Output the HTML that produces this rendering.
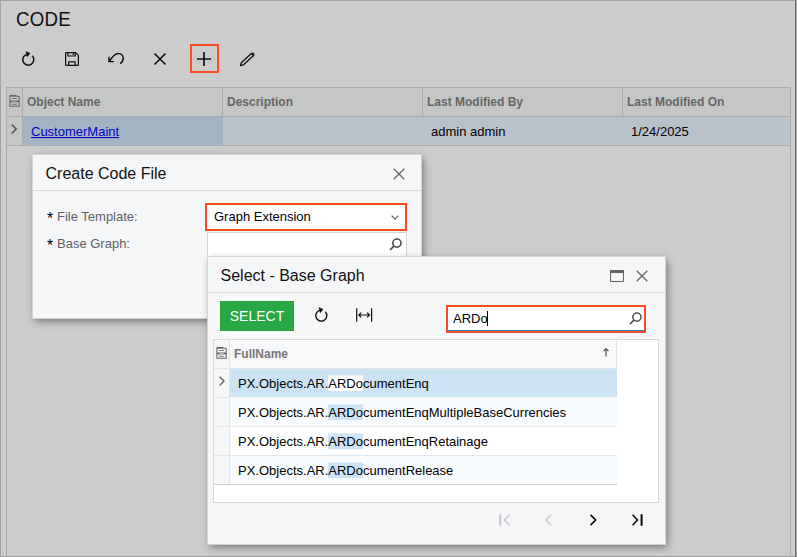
<!DOCTYPE html>
<html>
<head>
<meta charset="utf-8">
<title>Code</title>
<style>
html,body{margin:0;padding:0;}
body{width:797px;height:557px;overflow:hidden;background:#cccccc;font-family:"Liberation Sans",Arial,sans-serif;font-size:13px;color:#000;position:relative;}
.abs{position:absolute;}
.frame{position:absolute;left:0;top:0;width:797px;height:557px;box-sizing:border-box;border-left:1px solid #a2a2a2;border-top:1px solid #a2a2a2;border-bottom:1px solid #9c9c9c;pointer-events:none;z-index:50;}
.title{left:16px;top:9px;font-size:18.7px;letter-spacing:0.25px;line-height:22px;color:#111;transform:scaleY(1.05);transform-origin:0 17.2px;}
.tb svg{position:absolute;overflow:visible;}
.plusbox{left:190px;top:44px;width:29px;height:29px;box-sizing:border-box;border:2px solid #fb4b20;}
/* main grid */
.grid1{left:6px;top:87px;width:785px;height:480px;box-sizing:border-box;border:1px solid #a9abad;background:#cccccc;}
.g1head{left:7px;top:88px;width:783px;height:28px;background:#c5c7c6;}
.g1head div{position:absolute;top:0;height:28px;line-height:28px;font-weight:bold;font-size:12px;color:#666;box-sizing:border-box;border-left:1px solid #a9abad;padding-left:4px;white-space:nowrap;}
.g1row{left:7px;top:117px;width:783px;height:28px;background:#b9c1ca;}
.g1row div{position:absolute;top:0;height:28px;line-height:28px;font-size:13px;white-space:nowrap;}
a.lnk{color:#0000c6;text-decoration:underline;}
/* dialogs */
.dlg{background:#f5f6f7;box-shadow:0 0 0 1px #d2d4d7, 2px 3px 8px 0 rgba(0,0,0,.45);}
.dlg1{left:33px;top:155px;width:388px;height:163px;}
.dlg2{left:208px;top:257px;width:457px;height:287px;}
.dhead{position:absolute;left:0;top:0;right:0;border-bottom:1px solid #d6d8da;font-size:16px;color:#111;}
.lbl{font-size:13px;color:#5c6066;white-space:nowrap;transform:scaleY(1.05);transform-origin:0 12.3px;}
.ast{display:inline-block;width:10px;color:#000;font-size:15.5px;font-weight:normal;position:relative;top:3px;left:0;line-height:10px;}
.inp{box-sizing:border-box;background:#fff;border:1px solid #d3d6d9;}
.btn{left:220px;top:301px;width:74px;height:30px;background:#27a844;color:#fff;font-size:14px;line-height:30px;text-align:center;}
.g2{left:213px;top:339px;width:446px;height:164px;box-sizing:border-box;border:1px solid #d5d7da;background:#fff;}
.g2 .row{position:absolute;left:16px;width:387px;height:28px;line-height:28px;font-size:13px;white-space:nowrap;box-sizing:content-box;border-bottom:1px solid #e1e9ef;}
.g2 .row span.t{position:absolute;left:8px;top:1px;transform:scaleY(1.05);transform-origin:0 18.3px;}
.hl{background:#cce3f4;}
.hlw{background:#fff;}
</style>
</head>
<body>
<!-- page title -->
<div class="abs title">CODE</div>

<!-- toolbar -->
<div class="abs tb" style="left:0;top:0;">
  <!-- refresh -->
  <svg style="left:20px;top:51px" width="16" height="16" viewBox="0 0 16 16" fill="none" stroke="#111" stroke-width="1.5"><path d="M12.3 4.85 A5.5 5.5 0 1 1 7.6 3.15"/><path d="M5.9 0.6 L10 2.3 L7.3 5.7 Z" fill="#111" stroke-width="0.5"/></svg>
  <!-- save -->
  <svg style="left:64px;top:51px" width="16" height="16" viewBox="0 0 16 16" fill="none" stroke="#111" stroke-width="1.2" stroke-linejoin="round"><path d="M1.6 2.2 Q1.6 1.6 2.2 1.6 H11.6 L14.4 4.4 V13.7 Q14.4 14.3 13.8 14.3 H2.2 Q1.6 14.3 1.6 13.7 Z"/><path d="M3.9 1.6 V5 H11.2 V1.6"/><path d="M4.6 14.3 V10.9 H11.2 V14.3"/><rect x="8.7" y="2.3" width="1.5" height="1.5" fill="#111" stroke="none"/></svg>
  <!-- undo -->
  <svg style="left:108px;top:51px" width="16" height="16" viewBox="0 0 16 16" fill="none" stroke="#111" stroke-width="1.5"><path d="M1.2 10.4 C3.5 7 6.5 2.6 10.3 2.6 C13.5 2.6 15.2 5 15.2 7.5 C15.2 9.5 14 11.3 12.2 12.6"/><path d="M1 5.7 V10.6 H5.9" stroke-width="1.4"/><path d="M1 8 V10.6 H3.6 Z" fill="#111" stroke="none"/></svg>
  <!-- close -->
  <svg style="left:152px;top:51px" width="16" height="16" viewBox="0 0 16 16" fill="none" stroke="#111" stroke-width="1.6"><path d="M2.5 2.5 L13.5 13.5 M13.5 2.5 L2.5 13.5"/></svg>
  <!-- plus -->
  <svg style="left:196px;top:51px" width="16" height="16" viewBox="0 0 16 16" fill="none" stroke="#111" stroke-width="1.7"><path d="M8 1 V15 M1 8 H15"/></svg>
  <!-- pencil -->
  <svg style="left:239px;top:51px" width="16" height="16" viewBox="0 0 16 16" fill="none" stroke="#111" stroke-width="1.3"><path d="M1.6 14.5 L2.3 11.7 L12.3 2.5 Q13.8 1.7 14.6 2.8 Q15.3 3.8 14.3 4.7 L4.3 13.9 Z" stroke-linejoin="round"/><path d="M11.9 2.9 L12.3 2.5 Q13.8 1.7 14.6 2.8 Q15.3 3.8 14.3 4.7 L13.9 5.1 Z" fill="#111" stroke="none"/></svg>
</div>
<div class="abs plusbox"></div>

<!-- main grid -->
<div class="abs grid1"></div>
<div class="abs g1head">
  <div style="left:15px;width:200px;">Object Name</div>
  <div style="left:215px;width:200px;">Description</div>
  <div style="left:415px;width:200px;">Last Modified By</div>
  <div style="left:615px;width:168px;">Last Modified On</div>
</div>
<svg class="abs" style="left:9px;top:94px" width="12" height="14" viewBox="0 0 12 14" fill="none" stroke="#666" stroke-width="1.3"><path d="M0.9 1.9 H7.5 L10.2 2.7 V12.2 H0.9 Z" stroke-width="1.05"/><path d="M0.9 1.7 H7.3" stroke-width="1.5"/><path d="M0.9 7.45 H10.2" stroke-width="1.9"/><path d="M3.4 7.45 H7.6" stroke="#c5c7c6" stroke-width="0.6"/><path d="M3.2 4.5 H7.8 M3.2 10.3 H7.8" stroke-width="0.9"/></svg>
<div class="abs" style="left:7px;top:116px;width:783px;height:1px;background:#a9abad;"></div>
<div class="abs g1row">
  <div style="left:16px;width:200px;background:#a4b4c5;"><span style="position:absolute;left:8px;top:1px;transform:scaleY(1.05);transform-origin:0 18.3px;"><a class="lnk">CustomerMaint</a></span></div>
  <div style="left:424px;top:1px;transform:scaleY(1.05);transform-origin:0 18.3px;">admin admin</div>
  <div style="left:624px;top:1px;transform:scaleY(1.05);transform-origin:0 18.3px;">1/24/2025</div>
</div>
<div class="abs" style="left:7px;top:117px;width:16px;height:28px;background:#c5c7c6;border-right:1px solid #a9abad;box-sizing:border-box;"></div>
<svg class="abs" style="left:10px;top:123px" width="8" height="12" viewBox="0 0 8 12" fill="none" stroke="#4a4a4a" stroke-width="1.4"><path d="M1.7 1.6 L6.2 6.1 L1.7 10.6"/></svg>
<div class="abs" style="left:7px;top:145px;width:783px;height:1px;background:#a9abad;"></div>

<!-- dialog 1 -->
<div class="abs dlg dlg1">
  <div class="dhead" style="height:35px;"><span style="position:absolute;left:12.5px;top:9px;line-height:20px;">Create Code File</span></div>
  <svg class="abs" style="left:360px;top:13px" width="12" height="12" viewBox="0 0 12 12" fill="none" stroke="#666" stroke-width="1.3"><path d="M0.7 0.7 L11.3 11.3 M11.3 0.7 L0.7 11.3"/></svg>
  <div class="abs lbl" style="left:14px;top:54px;line-height:16px;"><span class="ast">*</span>File Template:</div>
  <div class="abs lbl" style="left:14px;top:81px;line-height:16px;"><span class="ast">*</span>Base Graph:</div>
  <div class="abs" style="left:172px;top:48px;width:202px;height:28px;box-sizing:border-box;border:2px solid #fb4b20;background:#fff;"><span style="position:absolute;left:7px;top:4px;line-height:16px;transform:scaleY(1.05);transform-origin:0 12.3px;">Graph Extension</span>
    <svg class="abs" style="left:183.5px;top:10px" width="8" height="5" viewBox="0 0 8 5" fill="none" stroke="#5e5e5e" stroke-width="1.2"><path d="M0.6 0.7 L4 4.1 L7.4 0.7"/></svg>
  </div>
  <div class="abs inp" style="left:174px;top:77px;width:200px;height:26px;">
    <svg class="abs" style="left:181.2px;top:4.7px" width="13" height="13" viewBox="0 0 13 13" fill="none" stroke="#4a4a4a" stroke-width="1.6"><circle cx="7.9" cy="5.1" r="4.1"/><path d="M4.9 8.1 L1 12"/></svg>
  </div>
</div>

<!-- dialog 2 -->
<div class="abs dlg dlg2">
  <div class="dhead" style="height:35px;"><span style="position:absolute;left:12.5px;top:8.5px;line-height:20px;">Select - Base Graph</span></div>
</div>
<!-- maximize + close -->
<svg class="abs" style="left:610px;top:270px" width="14" height="12" viewBox="0 0 14 12" fill="none" stroke="#636363"><path d="M0.5 0.5 H13.5 V11.5 H0.5 Z" stroke-width="1"/><path d="M0 1.5 H14" stroke-width="3"/></svg>
<svg class="abs" style="left:636px;top:270px" width="12" height="12" viewBox="0 0 12 12" fill="none" stroke="#636363" stroke-width="1.3"><path d="M0.7 0.7 L11.3 11.3 M11.3 0.7 L0.7 11.3"/></svg>

<div class="abs btn">SELECT</div>
<svg class="abs" style="left:312.5px;top:307px" width="16" height="16" viewBox="0 0 16 16" fill="none" stroke="#111" stroke-width="1.4"><path d="M12.3 4.85 A5.5 5.5 0 1 1 7.6 3.15"/><path d="M5.9 0.6 L10 2.3 L7.3 5.7 Z" fill="#111" stroke-width="0.5"/></svg>
<svg class="abs" style="left:356px;top:308px" width="17" height="14" viewBox="0 0 17 14" fill="none" stroke="#111" stroke-width="1.2"><path d="M0.7 0.3 V13.7 M15.6 0.3 V13.7 M2.8 7 H13.5 M5.2 4.6 L2.8 7 L5.2 9.4 M11.1 4.6 L13.5 7 L11.1 9.4"/></svg>

<!-- search box -->
<div class="abs" style="left:446px;top:305px;width:200px;height:28px;box-sizing:border-box;border:2px solid #fb4b20;background:#fff;">
  <div class="abs" style="left:0;right:0;bottom:0;height:1px;background:#1f84d4;"></div>
  <span style="position:absolute;left:5px;top:4px;line-height:16px;transform:scaleY(1.05);transform-origin:0 12.3px;">ARDo</span>
  <div class="abs" style="left:39px;top:4px;width:1px;height:15px;background:#000;"></div>
  <svg class="abs" style="left:181px;top:5px" width="13" height="13" viewBox="0 0 13 13" fill="none" stroke="#4f4f4f" stroke-width="1.5"><circle cx="7.9" cy="5.1" r="4.1"/><path d="M4.9 8.1 L0.9 12.1"/></svg>
</div>

<!-- grid 2 -->
<div class="abs g2">
  <div class="abs" style="left:0;top:0;width:402px;height:28px;background:#f7f8fa;border-bottom:1px solid #e3e5e7;border-right:1px solid #e3e5e7;"></div>
  <div class="abs" style="left:0;top:0;width:15px;height:144px;background:#f5f6f8;border-right:1px solid #e2e4e7;"></div>
  <div class="abs" style="left:0;top:28px;width:15px;height:1px;background:#e2e4e7;"></div>
  <div class="abs" style="left:0;top:57px;width:15px;height:1px;background:#e2e4e7;"></div>
  <div class="abs" style="left:0;top:86px;width:15px;height:1px;background:#e2e4e7;"></div>
  <div class="abs" style="left:0;top:115px;width:15px;height:1px;background:#e2e4e7;"></div>
  <div class="abs" style="left:0;top:144px;width:403px;height:1px;background:#c9cbcd;"></div>
  <svg class="abs" style="left:2px;top:6px" width="12" height="14" viewBox="0 0 12 14" fill="none" stroke="#636363" stroke-width="1.3"><path d="M0.9 1.9 H7.5 L10.2 2.7 V12.2 H0.9 Z" stroke-width="1.05"/><path d="M0.9 1.7 H7.3" stroke-width="1.5"/><path d="M0.9 7.45 H10.2" stroke-width="1.9"/><path d="M3.4 7.45 H7.6" stroke="#f7f8fa" stroke-width="0.6"/><path d="M3.2 4.5 H7.8 M3.2 10.3 H7.8" stroke-width="0.9"/></svg>
  <div class="abs" style="left:20px;top:0;line-height:28px;font-size:12px;font-weight:bold;color:#777;">FullName</div>
  <svg class="abs" style="left:388px;top:8px" width="8" height="9" viewBox="0 0 8 9" fill="none" stroke="#555" stroke-width="1.2"><path d="M4 0.8 V8.5 M1.6 3 L4 0.7 L6.4 3"/></svg>
  <svg class="abs" style="left:4px;top:35px" width="8" height="12" viewBox="0 0 8 12" fill="none" stroke="#666" stroke-width="1.4"><path d="M1.6 1.7 L6 6.1 L1.6 10.5"/></svg>
  <div class="row" style="top:29px;background:#cce3f4;border-bottom-color:#eaf2f8;"><span class="t">PX.Objects.AR.<span class="hlw">ARDo</span>cumentEnq</span></div>
  <div class="row" style="top:58px;background:#f8fbfd;"><span class="t">PX.Objects.AR.<span class="hl">ARDo</span>cumentEnqMultipleBaseCurrencies</span></div>
  <div class="row" style="top:87px;background:#fff;"><span class="t">PX.Objects.AR.<span class="hl">ARDo</span>cumentEnqRetainage</span></div>
  <div class="row" style="top:116px;background:#f8fbfd;border-bottom:none;"><span class="t">PX.Objects.AR.<span class="hl">ARDo</span>cumentRelease</span></div>
</div>

<!-- pager -->
<svg class="abs" style="left:498px;top:513px" width="14" height="14" viewBox="0 0 14 14" fill="none" stroke="#c3c6ca" stroke-width="1.5"><path d="M2.2 1.3 V12.7" stroke-width="2"/><path d="M11.4 1.8 L6.4 7 L11.4 12.2"/></svg>
<svg class="abs" style="left:542px;top:513px" width="14" height="14" viewBox="0 0 14 14" fill="none" stroke="#c3c6ca" stroke-width="1.5"><path d="M9.2 1.8 L4 7 L9.2 12.2"/></svg>
<svg class="abs" style="left:586px;top:513px" width="14" height="14" viewBox="0 0 14 14" fill="none" stroke="#111" stroke-width="1.75"><path d="M4.6 1.8 L9.6 7 L4.6 12.2"/></svg>
<svg class="abs" style="left:630px;top:513px" width="14" height="14" viewBox="0 0 14 14" fill="none" stroke="#111" stroke-width="1.65"><path d="M2.6 1.8 L7.5 7 L2.6 12.2"/><path d="M11.6 1.2 V12.8" stroke-width="2.1"/></svg>

<div class="frame"></div>
<div class="abs" style="left:794px;top:0;width:1px;height:556px;background:#cfcfcf;z-index:51;"></div><div class="abs" style="left:795px;top:0;width:1px;height:557px;background:#686b6d;z-index:51;"></div><div class="abs" style="left:796px;top:0;width:1px;height:557px;background:#a6a6a6;z-index:51;"></div>
</body>
</html>
